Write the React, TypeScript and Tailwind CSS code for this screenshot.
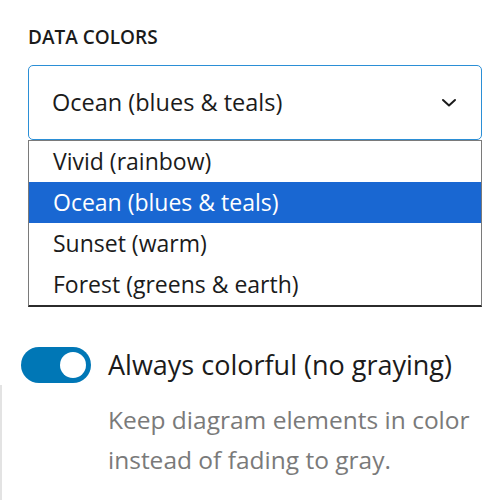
import { useState } from "react";

const options = [
  "Vivid (rainbow)",
  "Ocean (blues & teals)",
  "Sunset (warm)",
  "Forest (greens & earth)",
];

export default function App() {
  const [selected] = useState(1);
  const [on] = useState(true);

  return (
    <div
      className="h-[500px] w-[500px] overflow-hidden bg-white text-[#1b1b1b]"
      style={{ fontFamily: '"Open Sans", "Noto Sans", sans-serif' }}
    >
      {/* data colors select */}
      <div className="pl-[28px] pr-[18px] pt-[25px]">
        <div className="text-[19px] font-semibold leading-[24px]">
          DATA COLORS
        </div>
        <div className="relative mt-[16px]">
          <div className="flex h-[75px] items-center justify-between rounded-[5px] border border-[#2b8fd6] pl-[23px] pr-[24px]">
            <span className="text-[23.5px]">{options[selected]}</span>
            <svg width="16" height="10" viewBox="0 0 16 10" fill="none">
              <path
                d="M2 2l6 5.5L14 2"
                stroke="#1b1b1b"
                strokeWidth="2"
                strokeLinecap="round"
                strokeLinejoin="round"
              />
            </svg>
          </div>
          <ul className="absolute left-0 right-0 top-[75px] z-10 border border-[#7a7a7a] border-b-2 border-b-[#2b2b2b] bg-white">
            {options.map((o, i) => (
              <li
                key={o}
                className={
                  i === selected
                    ? "flex h-[41px] items-center bg-[#1967d2] pl-[24px] text-[23px] text-white"
                    : "flex h-[41px] items-center pl-[24px] text-[23px] text-[#1b1b1b]"
                }
              >
                {o}
              </li>
            ))}
          </ul>
        </div>
      </div>

      {/* toggle */}
      <div className="mt-[207px] flex h-[36px] items-center gap-[17px] pl-[21px]">
        <div
          className={
            on
              ? "flex h-[36px] w-[70px] shrink-0 items-center justify-end rounded-full bg-[#0077b6] pr-[5px]"
              : "flex h-[36px] w-[70px] shrink-0 items-center rounded-full bg-gray-300 pl-[5px]"
          }
        >
          <div className="h-[26px] w-[26px] rounded-full bg-white" />
        </div>
        <span className="whitespace-nowrap text-[27px] leading-[36px] text-[#1b1b1b]">
          Always colorful (no graying)
        </span>
      </div>

      <div className="mt-[2px] whitespace-nowrap border-l-2 border-[#e3e3e3] pb-[40px] pl-[106px] pt-[15px] text-[24.5px] leading-[40px] text-[#7a7a7a]">
        Keep diagram elements in color
        <br />
        instead of fading to gray.
      </div>
    </div>
  );
}
